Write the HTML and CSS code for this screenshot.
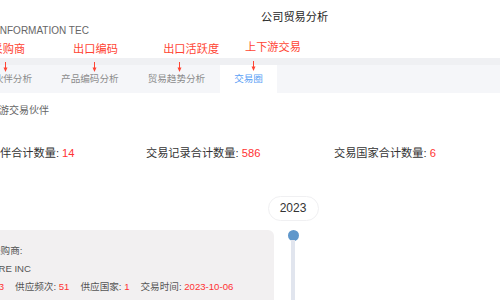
FILE: index.html
```html
<!DOCTYPE html>
<html lang="zh-CN">
<head>
<meta charset="utf-8">
<title>公司贸易分析</title>
<link rel="stylesheet" href="styles.css">
</head>
<body>
<div class="page">
  <header class="header">
    <div class="title">公司贸易分析</div>
    <div class="company">INFORMATION TEC</div>
  </header>

  <nav class="tabbar">
    <div class="tab">采购伙伴分析
      <span class="note note-1">采购商</span>
      <svg class="arrow arrow-1" width="5" height="10" viewBox="0 0 5 10"><line x1="2.5" y1="0" x2="2.5" y2="6" stroke="#f43" stroke-width="1"/><polygon points="0.5,5.5 4.5,5.5 2.5,10" fill="#f43"/></svg>
    </div>
    <div class="tab">产品编码分析
      <span class="note note-2">出口编码</span>
      <svg class="arrow arrow-2" width="5" height="10" viewBox="0 0 5 10"><line x1="2.5" y1="0" x2="2.5" y2="6" stroke="#f43" stroke-width="1"/><polygon points="0.5,5.5 4.5,5.5 2.5,10" fill="#f43"/></svg>
    </div>
    <div class="tab">贸易趋势分析
      <span class="note note-3">出口活跃度</span>
      <svg class="arrow arrow-3" width="5" height="10" viewBox="0 0 5 10"><line x1="2.5" y1="0" x2="2.5" y2="6" stroke="#f43" stroke-width="1"/><polygon points="0.5,5.5 4.5,5.5 2.5,10" fill="#f43"/></svg>
    </div>
    <div class="tab tab-active">交易圈
      <span class="note note-4">上下游交易</span>
      <svg class="arrow arrow-4" width="5" height="10" viewBox="0 0 5 10"><line x1="2.5" y1="0" x2="2.5" y2="6" stroke="#f43" stroke-width="1"/><polygon points="0.5,5.5 4.5,5.5 2.5,10" fill="#f43"/></svg>
    </div>
  </nav>

  <div class="section-title">上下游交易伙伴</div>

  <div class="stats">
    <div class="stat">交易伙伴合计数量: <span class="num">14</span></div>
    <div class="stat">交易记录合计数量: <span class="num">586</span></div>
    <div class="stat">交易国家合计数量: <span class="num">6</span></div>
  </div>

  <div class="timeline">
    <div class="year">2023</div>
    <div class="card">
      <div class="line">采购商:</div>
      <div class="line">ORE INC</div>
      <div class="line line-meta">
        <span>供应商数: <span class="num">3</span></span>
        <span>供应频次: <span class="num">51</span></span>
        <span>供应国家: <span class="num">1</span></span>
        <span>交易时间: <span class="num">2023-10-06</span></span>
      </div>
    </div>
    <div class="axis">
      <div class="dot"></div>
      <div class="rail"></div>
    </div>
  </div>
</div>
</body>
</html>
```

FILE: styles.css
```css
html, body {
  margin: 0;
  padding: 0;
  background: #fff;
  overflow: hidden;
}

body {
  font-family: "Liberation Sans", "Noto Sans CJK SC", sans-serif;
  color: #333;
}

.page {
  margin-left: -40px;
}

.header {
  height: 58px;
  box-sizing: border-box;
  padding-top: 10px;
}

.title {
  padding-left: 301px;
  font-size: 11.2px;
  line-height: 14px;
  color: #262626;
}

.company {
  padding-left: 37px;
  font-size: 10px;
  line-height: 14px;
  color: #666;
}

.tabbar {
  display: flex;
  height: 28px;
  border-top: 7px solid #eff0f3;
  background: #f5f6f9;
}

.tab {
  position: relative;
  padding: 0 14.5px;
  font-size: 9.6px;
  line-height: 28px;
  color: #8c8c8c;
  white-space: nowrap;
}

.tab-active {
  background: #fff;
  color: #5a9ff5;
}

.note {
  position: absolute;
  top: -23px;
  font-size: 11.2px;
  line-height: 14px;
  color: #f43;
  white-space: nowrap;
}

.note-1 { left: 31.5px; }
.note-2 { left: 26.5px; }
.note-3 { left: 30px; }
.note-4 { left: 25.3px; top: -25px; }

.arrow {
  position: absolute;
  top: -3px;
}

.arrow-1 { left: 42.5px; }
.arrow-2 { left: 45px; }
.arrow-3 { left: 43.5px; }
.arrow-4 { left: 31.8px; top: -4px; }

.section-title {
  margin-top: 11px;
  padding-left: 19px;
  font-size: 10px;
  line-height: 14px;
  color: #666;
}

.stats {
  display: grid;
  grid-template-columns: 179.6px 188px auto;
  margin-top: 28px;
  padding-left: 6.4px;
  font-size: 11.2px;
  line-height: 14px;
  color: #333;
}

.num {
  color: #f33;
}

.timeline {
  display: grid;
  grid-template-columns: 314px 38px;
  grid-template-rows: auto auto;
  row-gap: 9px;
  margin-top: 36px;
}

.year {
  grid-column: 2;
  grid-row: 1;
  justify-self: center;
  width: 51px;
  height: 25px;
  box-sizing: border-box;
  border: 1px solid #f0f0f2;
  border-radius: 13px;
  text-align: center;
  font-size: 12px;
  line-height: 23px;
  color: #333;
  background: #fff;
}

.card {
  grid-column: 1;
  grid-row: 2;
  min-height: 80px;
  box-sizing: border-box;
  padding: 12px 0 0 31px;
  border-radius: 0 6px 0 0;
  background: #f2f0f1;
  font-size: 9.6px;
  line-height: 18px;
  color: #555;
}

.line {
  white-space: nowrap;
}

.line-meta {
  display: flex;
  gap: 11px;
  margin-left: -36px;
}

.axis {
  grid-column: 2;
  grid-row: 2;
  display: flex;
  flex-direction: column;
  align-items: center;
}

.dot {
  width: 11px;
  height: 11px;
  border-radius: 50%;
  background: #5f97cb;
  flex: none;
}

.rail {
  width: 4px;
  flex: 1;
  min-height: 70px;
  margin-top: -1px;
  background: #e1e5ee;
}
```
